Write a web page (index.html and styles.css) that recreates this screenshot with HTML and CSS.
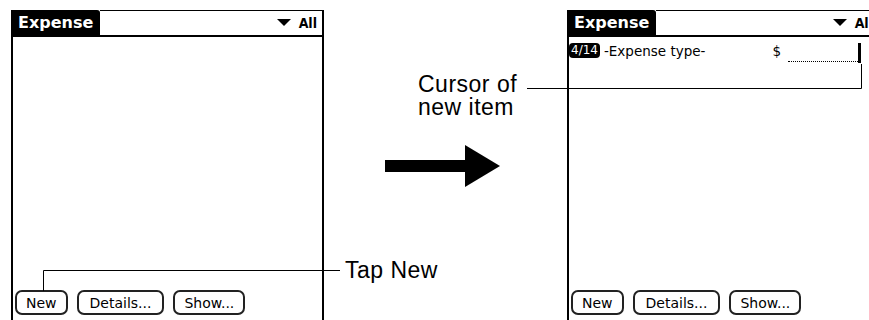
FILE: index.html
```html
<!DOCTYPE html>
<html lang="en">
<head>
  <meta charset="UTF-8" />
  <title>Expense - New item</title>
  <link rel="stylesheet" href="styles.css">
</head>
<body>
  <div class="figure">
    <div class="screen">
      <div class="titlebar">
        <div class="tab">Expense</div>
        <div class="menu"><span class="tri"></span><span class="cat">All</span></div>
      </div>
      <div class="list"></div>
      <div class="buttons">
        <button class="btn">New</button>
        <button class="btn btn-details">Details...</button>
        <button class="btn">Show...</button>
      </div>
    </div>

    <div class="middle">
      <p class="note note-cursor">Cursor of<br>new item</p>
      <svg class="arrow" width="115" height="42" viewBox="0 0 115 42">
        <rect x="0" y="15" width="81" height="12" fill="#000"/>
        <polygon points="80,0 115,21 80,42" fill="#000"/>
      </svg>
      <p class="note note-tap">Tap New</p>
    </div>

    <div class="screen">
      <div class="titlebar">
        <div class="tab">Expense</div>
        <div class="menu"><span class="tri"></span><span class="cat">All</span></div>
      </div>
      <div class="list">
        <div class="row">
          <span class="date">4/14</span>
          <span class="type">-Expense type-</span>
          <span class="amount">
            <span class="cur">$</span>
            <span class="field"></span>
            <span class="caret"></span>
          </span>
        </div>
      </div>
      <div class="buttons">
        <button class="btn">New</button>
        <button class="btn btn-details">Details...</button>
        <button class="btn">Show...</button>
      </div>
    </div>
  </div>

  <!-- leader lines for the callouts -->
  <svg class="leaders" width="869" height="320" viewBox="0 0 869 320">
    <path d="M43.5 291 V270.5 H340" />
    <path d="M527 88.5 H861.5 V64" />
  </svg>
</body>
</html>
```

FILE: styles.css
```css
body {
  margin: 0;
  width: 869px;
  height: 320px;
  overflow: hidden;
  background: #fff;
  color: #000;
  position: relative;
  font-family: "DejaVu Sans", sans-serif;
}
.figure {
  display: flex;
  padding-left: 11px;
}
.screen {
  flex-shrink: 0;
  width: 313px;
  height: 310px;
  margin-top: 10px;
  box-sizing: border-box;
  border-left: 2px solid #000;
  border-right: 2px solid #000;
  display: flex;
  flex-direction: column;
}
.titlebar {
  display: flex;
  height: 27px;
  box-sizing: border-box;
  border-bottom: 2px solid #000;
}
.tab {
  width: 87px;
  box-sizing: border-box;
  background: #000;
  color: #fff;
  font-weight: bold;
  font-size: 16px;
  line-height: 25px;
  padding-left: 5px;
  border-top-right-radius: 3px;
}
.menu {
  flex: 1;
  border-top: 1px solid #000;
  display: flex;
  justify-content: flex-end;
  align-items: center;
  gap: 8px;
  padding-right: 5px;
}
.tri {
  width: 0;
  height: 0;
  border-left: 7px solid transparent;
  border-right: 7px solid transparent;
  border-top: 7px solid #000;
  margin-top: -1px;
}
.cat {
  font-family: "DejaVu Sans Condensed", "DejaVu Sans", sans-serif;
  font-weight: bold;
  font-size: 14px;
}
.list {
  flex: 1;
}
.row {
  display: flex;
  align-items: flex-end;
  margin-top: 6px;
  padding-right: 17px;
  font-size: 13.5px;
  height: 20px;
}
.date {
  background: #000;
  color: #fff;
  border-radius: 4px;
  padding: 0 2px;
  font-size: 12px;
  line-height: 15px;
  margin-bottom: 5px;
}
.type {
  margin-left: 4px;
  margin-bottom: 4px;
}
.amount {
  margin-left: auto;
  display: flex;
  align-items: flex-end;
}
.cur {
  color: #000;
  margin-bottom: 4px;
}
.field {
  width: 70px;
  margin-left: 7px;
  border-bottom: 1px dotted #000;
  margin-bottom: 1px;
}
.caret {
  width: 3px;
  height: 20px;
  background: #000;
}
.buttons {
  display: flex;
  gap: 9px;
  padding: 0 0 5px 2px;
}
.btn {
  font-family: "DejaVu Sans", sans-serif;
  font-size: 14px;
  height: 25px;
  line-height: 20px;
  padding: 0 9px;
  background: #fff;
  color: #000;
  border: 2px solid #222;
  border-radius: 7px;
}
.btn-details {
  padding: 0 11px;
}
.middle {
  flex-shrink: 0;
  width: 243px;
  display: flex;
  flex-direction: column;
  align-items: flex-start;
}
.note {
  margin: 0;
  font-family: "Liberation Sans", Arial, sans-serif;
  font-size: 23px;
  line-height: 23px;
  letter-spacing: 0.5px;
}
.note-cursor {
  margin: 73px 0 0 94px;
}
.arrow {
  display: block;
  margin: 26px 0 0 61px;
}
.note-tap {
  margin: 72px 0 0 21px;
}
.leaders {
  position: absolute;
  left: 0;
  top: 0;
  pointer-events: none;
}
.leaders path {
  fill: none;
  stroke: #000;
  stroke-width: 1;
}
```
